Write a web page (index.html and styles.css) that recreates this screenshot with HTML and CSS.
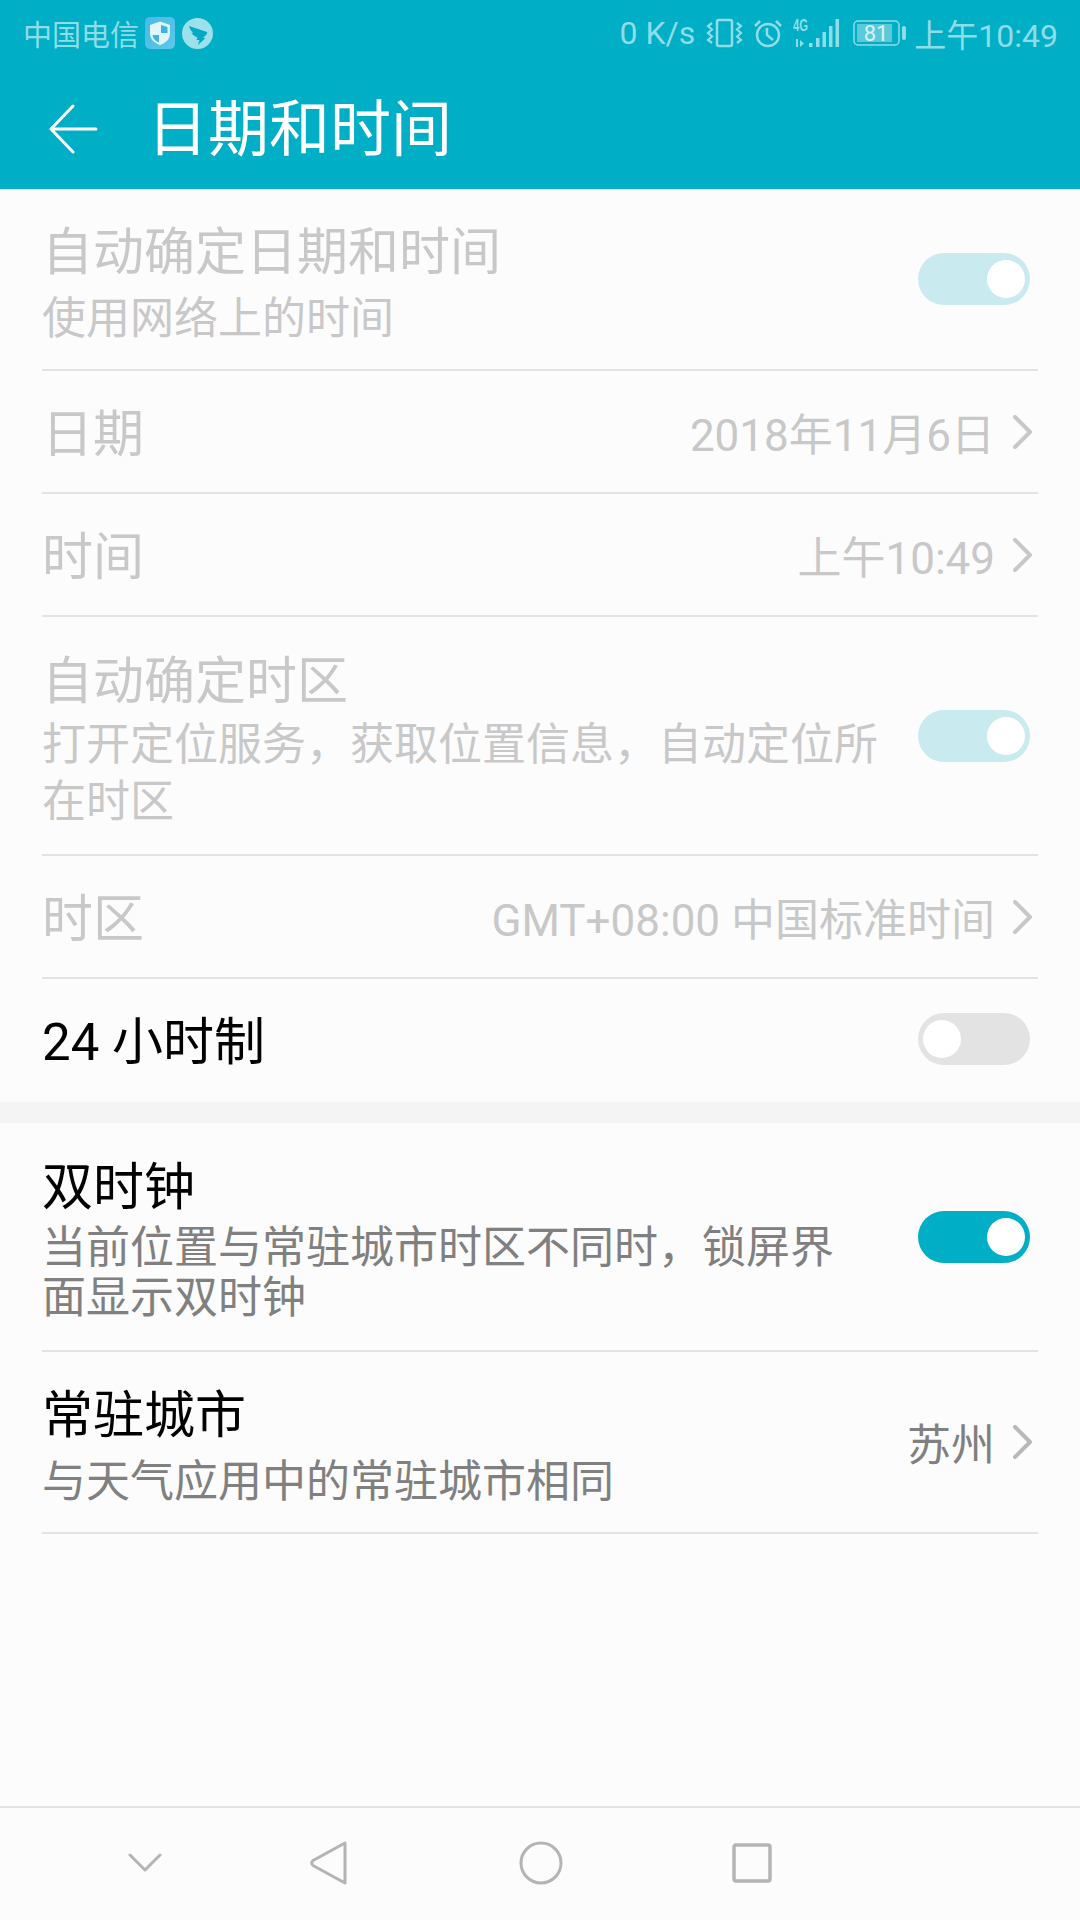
FILE: index.html
```html
<!DOCTYPE html>
<html lang="zh-CN">
<head>
<meta charset="utf-8">
<title>日期和时间</title>
<link rel="stylesheet" href="styles.css">
</head>
<body>
<div class="screen">
  <header class="top">
    <div class="status">
      <div class="status-left">
        <span class="carrier">中国电信</span>
        <svg class="ic-shield" width="30" height="32" viewBox="0 0 30 32">
          <defs><linearGradient id="sg" x1="0" y1="0" x2="1" y2="1"><stop offset="0" stop-color="#4cb8e6"/><stop offset="1" stop-color="#5cc8ea"/></linearGradient></defs>
          <rect width="30" height="32" rx="5" fill="url(#sg)"/>
          <path d="M15 4.500l10 3.500v8c0 6.500-4.500 10-10 12-5.500-2-10-5.500-10-12V8z" fill="#dff6fb"/>
          <path d="M16 8l6.500 2v6H16zM14 18v7.500c-3.500-1.500-6-3.500-6.500-7.500z" fill="#3fb4e2"/>
        </svg>
        <svg class="ic-ding" width="31" height="31" viewBox="0 0 31 31">
          <circle cx="15.500" cy="15.500" r="15.500" fill="#9be0ea"/>
          <path d="M7 8l18 6c.5 1 .0 2-1 3l-3 3h2.500L16 27l1.500-5h-3l1-2.500C11 18 9.500 14.500 9.500 14.500l2 .5C8 12 7 8 7 8z" fill="#00a9c4"/>
        </svg>
      </div>
      <div class="status-right">
        <span>0 K/s</span>
        <svg width="37" height="30" viewBox="0 0 37 30" fill="none" stroke="#8fdde8" stroke-width="2.200">
          <rect x="11" y="2" width="15" height="26" rx="2" stroke-width="2.500"/>
          <path d="M6 5L2 8l4 3.500L2 15l4 3.500L2 22l4 3M31 5l4 3-4 3.500 4 3.500-4 3.500 4 3.500-4 3"/>
        </svg>
        <svg width="28" height="30" viewBox="0 0 28 30" fill="none" stroke="#8fdde8" stroke-width="2.500">
          <circle cx="14" cy="17" r="11"/>
          <path d="M13 10v7l6 5M1 8l5-5M27 8l-5-5"/>
        </svg>
        <svg width="46" height="30" viewBox="0 0 46 30" fill="#8fdde8">
          <text x="0" y="13" class="net" textLength="15" lengthAdjust="spacingAndGlyphs">4G</text>
          <path d="M3 21h2v8H3zM7 22l4 3.500L7 29zM16 25h3.500v4H16zM23 20h3.500v9H23zM29.500 14h3.500v15h-3.500zM36 8h3.500v21H36zM42.500 1H46v28h-3.500z"/>
        </svg>
        <svg class="ic-batt" width="54" height="28" viewBox="0 0 54 28">
          <rect x="1" y="2" width="45" height="24" rx="4" fill="none" stroke="#8fdde8" stroke-width="1.500"/>
          <rect x="4" y="5" width="35" height="18" fill="#5bc9d9"/>
          <rect x="49" y="7" width="4" height="14" rx="2" fill="#8fdde8"/>
          <text x="23" y="22" class="batt" text-anchor="middle">81</text>
        </svg>
        <span class="clock">上午10:49</span>
      </div>
    </div>
    <div class="appbar">
      <svg class="back" width="50" height="50" viewBox="0 0 50 50" fill="none" stroke="#fff" stroke-width="3" stroke-linecap="round" stroke-linejoin="round">
        <path d="M48 25H3M25 2L3 25l22 23"/>
      </svg>
      <h1>日期和时间</h1>
    </div>
  </header>

  <main class="content">
    <section class="group">
      <div class="row h182 off">
        <div class="text"><div class="name">自动确定日期和时间</div><div class="sub">使用网络上的时间</div></div>
        <span class="switch dim"><i></i></span>
      </div>
      <div class="row h123 off">
        <div class="text"><div class="name">日期</div></div>
        <span class="val">2018年11月6日</span>
        <svg class="chev" width="20" height="34" viewBox="0 0 20 34"><path d="M2 2l15 15L2 32"/></svg>
      </div>
      <div class="row h123 off">
        <div class="text"><div class="name">时间</div></div>
        <span class="val">上午10:49</span>
        <svg class="chev" width="20" height="34" viewBox="0 0 20 34"><path d="M2 2l15 15L2 32"/></svg>
      </div>
      <div class="row h239 off">
        <div class="text narrow"><div class="name">自动确定时区</div><div class="sub two">打开定位服务，获取位置信息，自动定位所在时区</div></div>
        <span class="switch dim"><i></i></span>
      </div>
      <div class="row h123 off">
        <div class="text"><div class="name">时区</div></div>
        <span class="val">GMT+08:00 中国标准时间</span>
        <svg class="chev" width="20" height="34" viewBox="0 0 20 34"><path d="M2 2l15 15L2 32"/></svg>
      </div>
      <div class="row h123 last">
        <div class="text"><div class="name">24 小时制</div></div>
        <span class="switch unset"><i></i></span>
      </div>
    </section>
    <div class="gap"></div>
    <section class="group">
      <div class="row h229">
        <div class="text narrow2"><div class="name">双时钟</div><div class="sub two tight">当前位置与常驻城市时区不同时，锁屏界面显示双时钟</div></div>
        <span class="switch on"><i></i></span>
      </div>
      <div class="row h182">
        <div class="text"><div class="name">常驻城市</div><div class="sub">与天气应用中的常驻城市相同</div></div>
        <span class="val">苏州</span>
        <svg class="chev" width="20" height="34" viewBox="0 0 20 34"><path d="M2 2l15 15L2 32"/></svg>
      </div>
    </section>
  </main>

  <nav class="nav">
    <svg width="34" height="20" viewBox="0 0 34 20" fill="none" stroke="#b4b4b4" stroke-width="3" stroke-linecap="round" stroke-linejoin="round"><path d="M2 2l15 15L32 2"/></svg>
    <svg class="nav-back" width="38" height="44" viewBox="0 0 38 44" fill="none" stroke="#b4b4b4" stroke-width="3" stroke-linejoin="round"><path d="M35 2v40L3 24.500c-1.500-1.500-1.500-3.500 0-5z"/></svg>
    <svg class="nav-home" width="44" height="44" viewBox="0 0 44 44" fill="none" stroke="#b4b4b4" stroke-width="3"><circle cx="22" cy="22" r="20"/></svg>
    <svg class="nav-recent" width="40" height="40" viewBox="0 0 40 40" fill="none" stroke="#b4b4b4" stroke-width="3.500"><rect x="2" y="2" width="36" height="36" rx="2"/></svg>
  </nav>
</div>
</body>
</html>
```

FILE: styles.css
```css
* { box-sizing: border-box; }
html, body { margin: 0; padding: 0; }
body {
  width: 1080px;
  height: 1920px;
  overflow: hidden;
  background: #fcfcfc;
  font-family: Roboto, "Noto Sans CJK SC", sans-serif;
}
.screen { width: 1080px; height: 1920px; display: flex; flex-direction: column; }

.top { background: #00aec5; height: 189px; flex: none; }
.status {
  height: 66px;
  padding: 0 22px 0 23px;
  display: flex;
  align-items: center;
  justify-content: space-between;
  color: #8fdde8;
  font-weight: 400;
}
.status-left { display: flex; align-items: center; font-size: 29px; }
.status-right { display: flex; align-items: center; font-size: 32px; gap: 11px; }
.ic-shield { margin-left: 6px; }
.ic-ding { margin-left: 7px; }
.ic-batt { margin-left: 3px; }
.clock { margin-left: -4px; }
.net { font: 700 16px "Liberation Sans", sans-serif; }
.batt { font: 400 22px Roboto, sans-serif; fill: #d8f4f8; }

.appbar { height: 123px; display: flex; align-items: center; padding: 6px 0 0 48px; }
.back { flex: none; margin-bottom: 3px; }
.appbar h1 {
  margin: 0 0 0 49px;
  color: #fff;
  font-size: 61px;
  font-weight: 400;
  line-height: 1;
}

.content { flex: 1; }
.group { padding: 0 42px; }
.gap { height: 21px; background: #f4f4f4; }
.row {
  display: flex;
  align-items: center;
  border-bottom: 2px solid #e3e3e3;
  padding-right: 8px;
}
.row.last { border-bottom: 0; padding-bottom: 3px; }
.h182 { height: 182px; }
.h123 { height: 123px; }
.h239 { height: 239px; }
.h229 { height: 229px; }

.text { flex: 1; min-width: 0; padding-top: 7px; }
.narrow { padding-right: 20px; }
.narrow2 { padding-right: 50px; }
.name { font-size: 51px; line-height: 62px; color: #000; font-weight: 400; }
.sub { font-size: 44px; line-height: 57px; color: #808080; font-weight: 400; margin: 7px 0 -4px; }
.sub.two { margin-top: 4px; }
.sub.tight { line-height: 50px; margin-bottom: 0; }
.val { font-size: 44px; color: #808080; font-weight: 400; margin-right: 18px; }
.off .name, .off .sub, .off .val { color: #c8c8c8; }
.chev { flex: none; margin-right: -3px; fill: none; stroke: #b8b8b8; stroke-width: 4; stroke-linecap: round; stroke-linejoin: round; }
.off .chev { stroke: #c8c8c8; }

.switch {
  flex: none;
  width: 112px;
  height: 52px;
  border-radius: 26px;
  display: flex;
  align-items: center;
  padding: 0 5px;
  margin-left: 20px;
}
.switch i { width: 38px; height: 38px; border-radius: 50%; background: #fff; }
.switch.on { background: #00aec5; justify-content: flex-end; }
.switch.dim { background: #c9ebf0; justify-content: flex-end; }
.switch.unset { background: #e3e3e3; }

.nav {
  flex: none;
  height: 114px;
  border-top: 2px solid #e3e3e3;
  display: flex;
  align-items: center;
  padding: 0 0 3px 128px;
}
.nav-back { margin-left: 148px; }
.nav-home { margin-left: 171px; }
.nav-recent { margin-left: 169px; }
```
